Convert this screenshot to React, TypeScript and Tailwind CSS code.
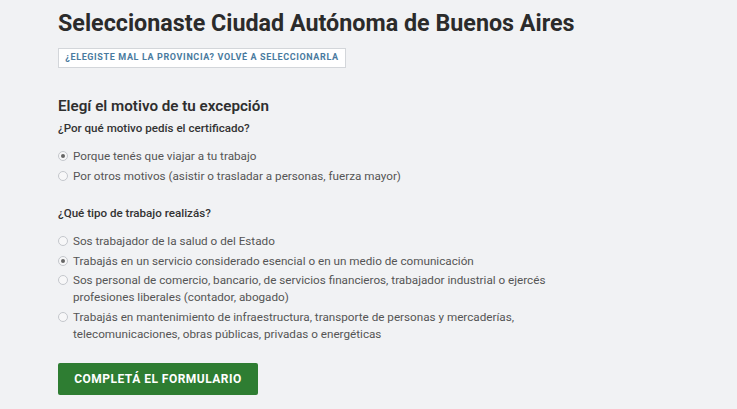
import React from "react";

const motivos = [
  { label: "Porque tenés que viajar a tu trabajo", checked: true },
  { label: "Por otros motivos (asistir o trasladar a personas, fuerza mayor)", checked: false },
];

const trabajos = [
  { label: "Sos trabajador de la salud o del Estado", checked: false },
  { label: "Trabajás en un servicio considerado esencial o en un medio de comunicación", checked: true },
  {
    label:
      "Sos personal de comercio, bancario, de servicios financieros, trabajador industrial o ejercés profesiones liberales (contador, abogado)",
    checked: false,
  },
  {
    label:
      "Trabajás en mantenimiento de infraestructura, transporte de personas y mercaderías, telecomunicaciones, obras públicas, privadas o energéticas",
    checked: false,
  },
];

function Radio({ label, checked }: { label: string; checked: boolean }) {
  return (
    <label className="flex items-start gap-[5px] text-[11.7px] leading-[17px] text-[#555]">
      <span className="mt-[3px] flex h-[10px] w-[10px] shrink-0 items-center justify-center rounded-full border border-[#c4c7cc] bg-[#f7f7f8]">
        {checked && <span className="h-[4px] w-[4px] rounded-full bg-[#666]" />}
      </span>
      <span>{label}</span>
    </label>
  );
}

export default function App() {
  return (
    <div className="h-[409px] w-[737px] overflow-hidden bg-[#f1f2f4] pl-[58px] pt-[9px] font-['Roboto',sans-serif]">
      <h1 className="text-[23.3px] font-bold leading-[28px] text-[#2b2b2b]">Seleccionaste Ciudad Autónoma de Buenos Aires</h1>
      <button className="mt-[11px] h-[20px] w-[288px] border border-[#d3d6da] bg-white text-[9px] font-bold uppercase tracking-[0.07em] text-[#4a7ba0]">
        ¿Elegiste mal la provincia? Volvé a seleccionarla
      </button>

      <h2 className="mt-[28px] text-[15.2px] font-semibold leading-[20px] text-[#2f2f2f]">Elegí el motivo de tu excepción</h2>
      <p className="mt-[4px] text-[11.6px] font-medium leading-[16px] text-[#333]">¿Por qué motivo pedís el certificado?</p>
      <div className="mt-[12px] flex flex-col gap-[3px]">
        {motivos.map(m => (
          <Radio key={m.label} {...m} />
        ))}
      </div>

      <p className="mt-[20px] text-[11.6px] font-medium leading-[16px] text-[#333]">¿Qué tipo de trabajo realizás?</p>
      <div className="mt-[12px] flex w-[495px] flex-col gap-[2.5px]">
        {trabajos.map(t => (
          <Radio key={t.label} {...t} />
        ))}
      </div>

      <button className="mt-[20px] h-[32px] w-[200px] rounded-[2px] bg-[#2e7d32] text-[12px] font-bold uppercase tracking-[0.04em] text-white">
        Completá el formulario
      </button>
    </div>
  );
}
